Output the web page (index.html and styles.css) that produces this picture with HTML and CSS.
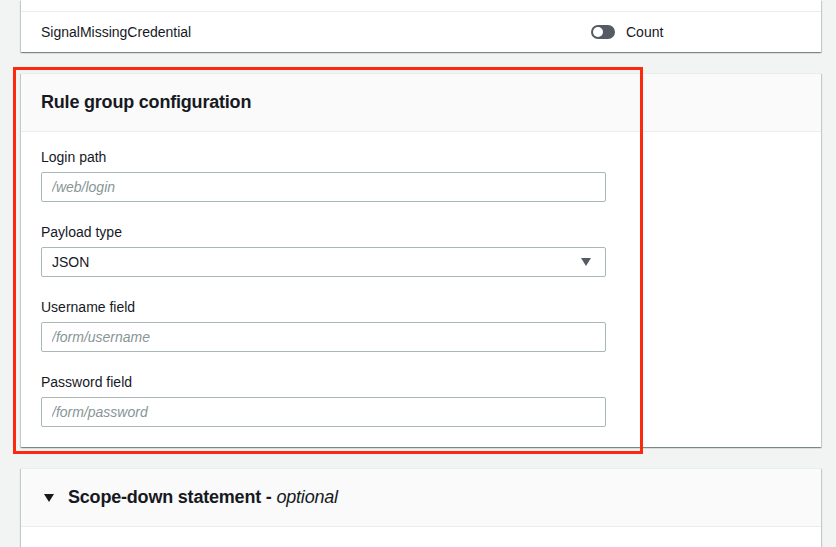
FILE: index.html
```html
<!DOCTYPE html>
<html lang="en">
<head>
<meta charset="utf-8">
<title>Rule group configuration</title>
<link rel="stylesheet" href="styles.css">
</head>
<body>
<div class="page">
  <section class="card">
    <div class="row-cut"></div>
    <div class="row">
      <span class="rule-name">SignalMissingCredential</span>
      <span class="action"><span class="toggle"><span class="knob"></span></span><span>Count</span></span>
    </div>
  </section>

  <section class="card highlighted">
    <div class="card-header">
      <h2 class="card-title">Rule group configuration</h2>
    </div>
    <div class="card-body">
      <div class="field">
        <label class="field-label">Login path</label>
        <input class="text-input" type="text" placeholder="/web/login">
      </div>
      <div class="field">
        <label class="field-label">Payload type</label>
        <div class="select">
          <span>JSON</span>
          <svg class="caret" width="10" height="8" viewBox="0 0 10 8"><path d="M0 0H10L5 8Z" fill="#545b64"/></svg>
        </div>
      </div>
      <div class="field">
        <label class="field-label">Username field</label>
        <input class="text-input" type="text" placeholder="/form/username">
      </div>
      <div class="field">
        <label class="field-label">Password field</label>
        <input class="text-input" type="text" placeholder="/form/password">
      </div>
    </div>
    <div class="highlight-box"></div>
  </section>

  <section class="card">
    <div class="card-header">
      <svg class="expand" width="10" height="8" viewBox="0 0 10 8"><path d="M0 0H10L5 8Z" fill="#16191f"/></svg>
      <h2 class="card-title">Scope-down statement - <em class="optional">optional</em></h2>
    </div>
    <div class="card-body scope-body"></div>
  </section>
</div>
</body>
</html>
```

FILE: styles.css
```css
html, body {
  margin: 0;
  padding: 0;
  height: 100%;
  overflow: hidden;
}
body {
  background: #f2f3f3;
  font-family: "Liberation Sans", Arial, sans-serif;
  color: #16191f;
  font-size: 14px;
}
.page {
  padding: 0 15px 0 21px;
}
.card {
  background: #ffffff;
  box-shadow: 0 1px 1px 0 rgba(0, 28, 36, 0.3), 1px 1px 1px 0 rgba(0, 28, 36, 0.15), -1px 1px 1px 0 rgba(0, 28, 36, 0.15);
  border-top: 1px solid #eaeded;
}
.card:first-child {
  border-top: none;
}
.card + .card {
  margin-top: 21px;
}
.row-cut {
  height: 11px;
}
.row {
  display: grid;
  grid-template-columns: 550px 1fr;
  align-items: center;
  height: 40px;
  padding-left: 20px;
  border-top: 1px solid #eaeded;
}
.rule-name {
  font-size: 14px;
}
.action {
  display: flex;
  align-items: center;
  gap: 11px;
}
.toggle {
  width: 24px;
  height: 14px;
  border-radius: 7px;
  background: #545b64;
  display: flex;
  align-items: center;
  padding-left: 2px;
  box-sizing: border-box;
}
.knob {
  width: 10px;
  height: 10px;
  border-radius: 50%;
  background: #ffffff;
}
.highlighted {
  position: relative;
}
.card-header {
  height: 57px;
  background: #fafafa;
  border-bottom: 1px solid #eaeded;
  display: flex;
  align-items: center;
  padding: 0 20px;
  gap: 14px;
}
.card-title {
  margin: 0;
  font-size: 18px;
  font-weight: 700;
  letter-spacing: -0.2px;
}
.optional {
  font-weight: 400;
  font-style: italic;
}
.expand {
  margin-left: 3px;
}
.card-body {
  padding: 14px 20px 20px;
}
.field {
  width: 565px;
}
.field + .field {
  margin-top: 19px;
}
.field-label {
  display: block;
  line-height: 22px;
  font-size: 14px;
  margin-bottom: 4px;
}
.text-input, .select {
  display: block;
  width: 100%;
  height: 30px;
  box-sizing: border-box;
  border: 1px solid #aab7b8;
  border-radius: 2px;
  background: #ffffff;
  padding: 0 10px;
  font-family: "Liberation Sans", Arial, sans-serif;
  font-size: 14px;
  color: #16191f;
  margin: 0;
}
.text-input::placeholder {
  color: #879596;
  font-style: italic;
}
.select {
  display: flex;
  align-items: center;
  justify-content: space-between;
  padding-right: 14px;
}
.scope-body {
  height: 40px;
  padding: 0;
}
.highlight-box {
  position: absolute;
  top: -7px;
  left: -8px;
  width: 630px;
  height: 387px;
  border: 3px solid #fb2a0e;
  box-sizing: border-box;
  pointer-events: none;
}
```
